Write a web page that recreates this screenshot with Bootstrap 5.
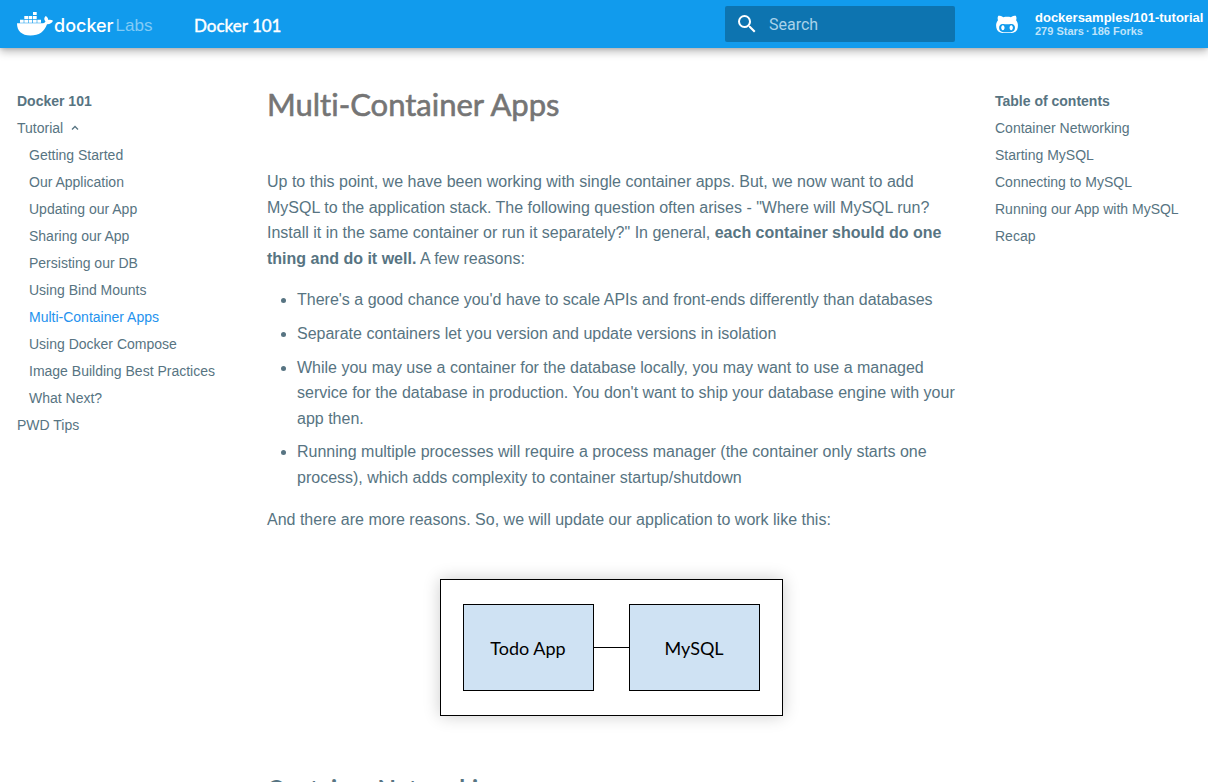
<!DOCTYPE html>
<html lang="en">
<head>
<meta charset="utf-8">
<meta name="viewport" content="width=device-width, initial-scale=1">
<title>Multi-Container Apps - Docker 101</title>
<link href="https://cdn.jsdelivr.net/npm/bootstrap@5.3.0/dist/css/bootstrap.min.css" rel="stylesheet">
<style>
  :root { --ink: #577482; --brand: #119bed; --side: 242px; }
  body { font-family: "Liberation Sans", Arial, sans-serif; font-size: 16px; line-height: 1.6; color: var(--ink); }
  ::-webkit-scrollbar { display: none; }
  a { text-decoration: none; color: inherit; }
  .topbar { height: 48px; background: var(--brand); box-shadow: 0 0 4px rgba(0,0,0,.2), 0 4px 8px rgba(0,0,0,.25); }
  .brand-link { width: 194px; padding-left: 17px; color: #fff; }
  .brand-word { font: 500 18px/24px Inter, sans-serif; padding-top: 4px; }
  .brand-labs { font-size: 17px; line-height: 24px; color: #82cbf6; padding-top: 4px; margin-left: 2px; }
  .site-title { font: 400 17px/24px Lato, sans-serif; color: #fff; -webkit-text-stroke: 0.4px; }
  .search { width: 230px; height: 36px; background: #0d74b0; border-radius: 2px; padding-left: 10px; }
  .search input { font: 400 16px/24px Roboto, sans-serif; color: #fff; background: none; border: 0; outline: 0; width: 100%; padding: 2px 0 0; }
  .search input::placeholder { color: #a9d2ea; opacity: 1; }
  .search svg { margin-right: 10px; }
  .repo { width: 213px; margin-left: 40px; color: #fff; font-weight: 700; }
  .repo-name { font-size: 13px; line-height: 14px; }
  .repo-facts { font-size: 11px; line-height: 13px; color: #bfe3fa; gap: 2px; }
  .side { width: var(--side); font-size: 14px; line-height: 18px; padding-top: 44px; }
  .side-left { padding-left: 17px; }
  .side-right { padding-left: 29px; }
  .side ul { list-style: none; margin: 0; padding: 0; }
  .side li, .side h2 { margin: 0 0 9px; }
  .side h2 { font-size: 14px; line-height: 18px; font-weight: 700; }
  .side ul ul { padding: 9px 0 0 12px; }
  .side ul ul li:last-child { margin-bottom: 0; }
  .side .current { color: #2492ee; }
  .article { min-width: 0; padding: 36px 11px 48px 25px; }
  .article h1, .article h2 { font-family: Lato, sans-serif; font-variant-ligatures: none; }
  .article h1 { font-size: 31px; line-height: 40px; font-weight: 400; color: #757575; margin: 0 0 45px; -webkit-text-stroke: 0.6px; }
  .article h2 { font-size: 24px; line-height: 35px; font-weight: 700; color: var(--ink); margin: 55px 0 16px; }
  .article p { margin: 0 0 16px; }
  .article ul { margin: 0 0 16px; padding-left: 30px; }
  .article li + li { margin-top: 8px; }
  .diagram { width: 343px; margin: 47px auto 0; padding: 24px 22px; border: 1px solid #000; background: #fff; box-shadow: 0 0 16px rgba(0,0,0,.2); }
  .node { width: 131px; height: 87px; border: 1px solid #000; background: #cfe2f3; color: #000; font: 400 18px/24px Lato, sans-serif; }
  .wire { height: 1px; background: #000; }
</style>
</head>
<body>
<header class="topbar sticky-top d-flex align-items-center">
  <a class="brand-link d-flex align-items-center" href="#" aria-label="docker Labs">
    <svg class="flex-shrink-0" width="37" height="26" viewBox="0 0 37 26" fill="#fff" aria-hidden="true">
      <path d="M16 1h3.700v3H16zM7.300 5h3.700v3H7.300zM11.600 5h3.700v3h-3.700zM16 5h3.700v3H16zM3 8.700h3.700v3H3zM7.300 8.700h3.700v3H7.300zM11.600 8.700h3.700v3h-3.700zM16 8.700h3.700v3H16zM20.300 8.700h3.700v3h-3.700z"/>
      <path d="M0 12.300h24.500c2 0 3.500-.500 4-1.800-1.800-1.800-1.500-4 .200-5.500 1.600 1 2.500 2.400 2.600 4 1.700-.400 3.600-.100 4.700.800-1 2.400-3.200 3.500-6 3.400C27.500 20.500 22 24.500 13.500 24.500 4.500 24.500 0 20 0 12.300z"/>
    </svg>
    <span class="brand-word">docker</span><span class="brand-labs">Labs</span>
  </a>
  <span class="site-title pt-1 me-auto">Docker 101</span>
  <form class="search d-flex align-items-center" role="search">
    <svg class="flex-shrink-0" width="24" height="24" viewBox="0 0 24 24" fill="#fff" aria-hidden="true"><path d="M9.500 3A6.500 6.500 0 0 1 16 9.500c0 1.610-.590 3.090-1.560 4.230l.270.270h.790l5 5-1.500 1.500-5-5v-.790l-.270-.270A6.516 6.516 0 0 1 9.500 16a6.500 6.500 0 0 1 0-13m0 2C7 5 5 7 5 9.500S7 14 9.500 14 14 12 14 9.500 12 5 9.500 5z"/></svg>
    <input type="text" placeholder="Search" aria-label="Search">
  </form>
  <a class="repo d-flex align-items-center" href="#">
    <svg class="flex-shrink-0 me-3" width="24" height="24" viewBox="-24 -16 528 528" fill="#fff" aria-hidden="true">
      <path d="M186.100 328.700c0 20.900-10.900 55.100-36.700 55.100s-36.700-34.200-36.700-55.100 10.900-55.100 36.700-55.100 36.700 34.200 36.700 55.100zM480 278.200c0 31.900-3.200 65.700-17.500 95-37.900 76.600-142.100 74.800-216.700 74.800-75.800 0-186.200 2.700-225.600-74.800-14.600-29-20.200-63.100-20.200-95 0-41.900 13.900-81.500 41.500-113.600-5.200-15.800-7.700-32.400-7.700-48.800 0-21.500 4.900-32.300 14.600-51.800 45.300 0 74.300 9 108.800 36 29-6.900 58.800-10 88.700-10 27 0 54.200 2.900 80.400 9.200 34-26.700 63-35.200 107.800-35.200 9.800 19.500 14.600 30.300 14.600 51.800 0 16.400-2.600 32.700-7.700 48.200 27.500 32.400 39 72.300 39 114.200zm-64.300 50.500c0-43.900-26.700-82.600-73.500-82.600-18.900 0-37 3.400-56 6-14.900 2.300-29.800 3.200-45.100 3.200-15.200 0-30.100-.900-45.100-3.200-18.700-2.600-37-6-56-6-46.800 0-73.500 38.700-73.500 82.600 0 87.800 80.400 101.300 150.400 101.300h48.200c70.300 0 150.600-13.400 150.600-101.300zm-82.600-55.100c-25.800 0-36.700 34.200-36.700 55.100s10.900 55.100 36.700 55.100 36.700-34.200 36.700-55.100-10.900-55.100-36.700-55.100z"/>
    </svg>
    <span><span class="repo-name d-block">dockersamples/101-tutorial</span><span class="repo-facts d-flex"><span>279 Stars</span><span>·</span><span>186 Forks</span></span></span>
  </a>
</header>
<div class="d-flex">
  <nav class="side side-left flex-shrink-0" aria-label="Pages">
    <h2>Docker 101</h2>
    <ul>
      <li><a href="#">Tutorial <svg class="ms-1" width="8" height="12" viewBox="0 0 8 12" fill="none" stroke="#577482" stroke-width="1.300" aria-hidden="true"><path d="M1 6.500l3-3 3 3"/></svg></a>
        <ul>
          <li><a href="#">Getting Started</a></li>
          <li><a href="#">Our Application</a></li>
          <li><a href="#">Updating our App</a></li>
          <li><a href="#">Sharing our App</a></li>
          <li><a href="#">Persisting our DB</a></li>
          <li><a href="#">Using Bind Mounts</a></li>
          <li><a class="current" href="#" aria-current="page">Multi-Container Apps</a></li>
          <li><a href="#">Using Docker Compose</a></li>
          <li><a href="#">Image Building Best Practices</a></li>
          <li><a href="#">What Next?</a></li>
        </ul>
      </li>
      <li><a href="#">PWD Tips</a></li>
    </ul>
  </nav>
  <main class="article flex-grow-1">
    <h1>Multi-Container Apps</h1>
    <p>Up to this point, we have been working with single container apps. But, we now want to add MySQL to the application stack. The following question often arises - "Where will MySQL run? Install it in the same container or run it separately?" In general, <strong>each container should do one thing and do it well.</strong> A few reasons:</p>
    <ul>
      <li>There's a good chance you'd have to scale APIs and front-ends differently than databases</li>
      <li>Separate containers let you version and update versions in isolation</li>
      <li>While you may use a container for the database locally, you may want to use a managed service for the database in production. You don't want to ship your database engine with your app then.</li>
      <li>Running multiple processes will require a process manager (the container only starts one process), which adds complexity to container startup/shutdown</li>
    </ul>
    <p>And there are more reasons. So, we will update our application to work like this:</p>
    <div class="diagram d-flex align-items-center">
      <div class="node flex-shrink-0 d-flex align-items-center justify-content-center">Todo App</div>
      <div class="wire flex-grow-1"></div>
      <div class="node flex-shrink-0 d-flex align-items-center justify-content-center">MySQL</div>
    </div>
    <h2>Container Networking</h2>
  </main>
  <nav class="side side-right flex-shrink-0" aria-label="Table of contents">
    <h2>Table of contents</h2>
    <ul>
      <li><a href="#">Container Networking</a></li>
      <li><a href="#">Starting MySQL</a></li>
      <li><a href="#">Connecting to MySQL</a></li>
      <li><a href="#">Running our App with MySQL</a></li>
      <li><a href="#">Recap</a></li>
    </ul>
  </nav>
</div>
</body>
</html>
